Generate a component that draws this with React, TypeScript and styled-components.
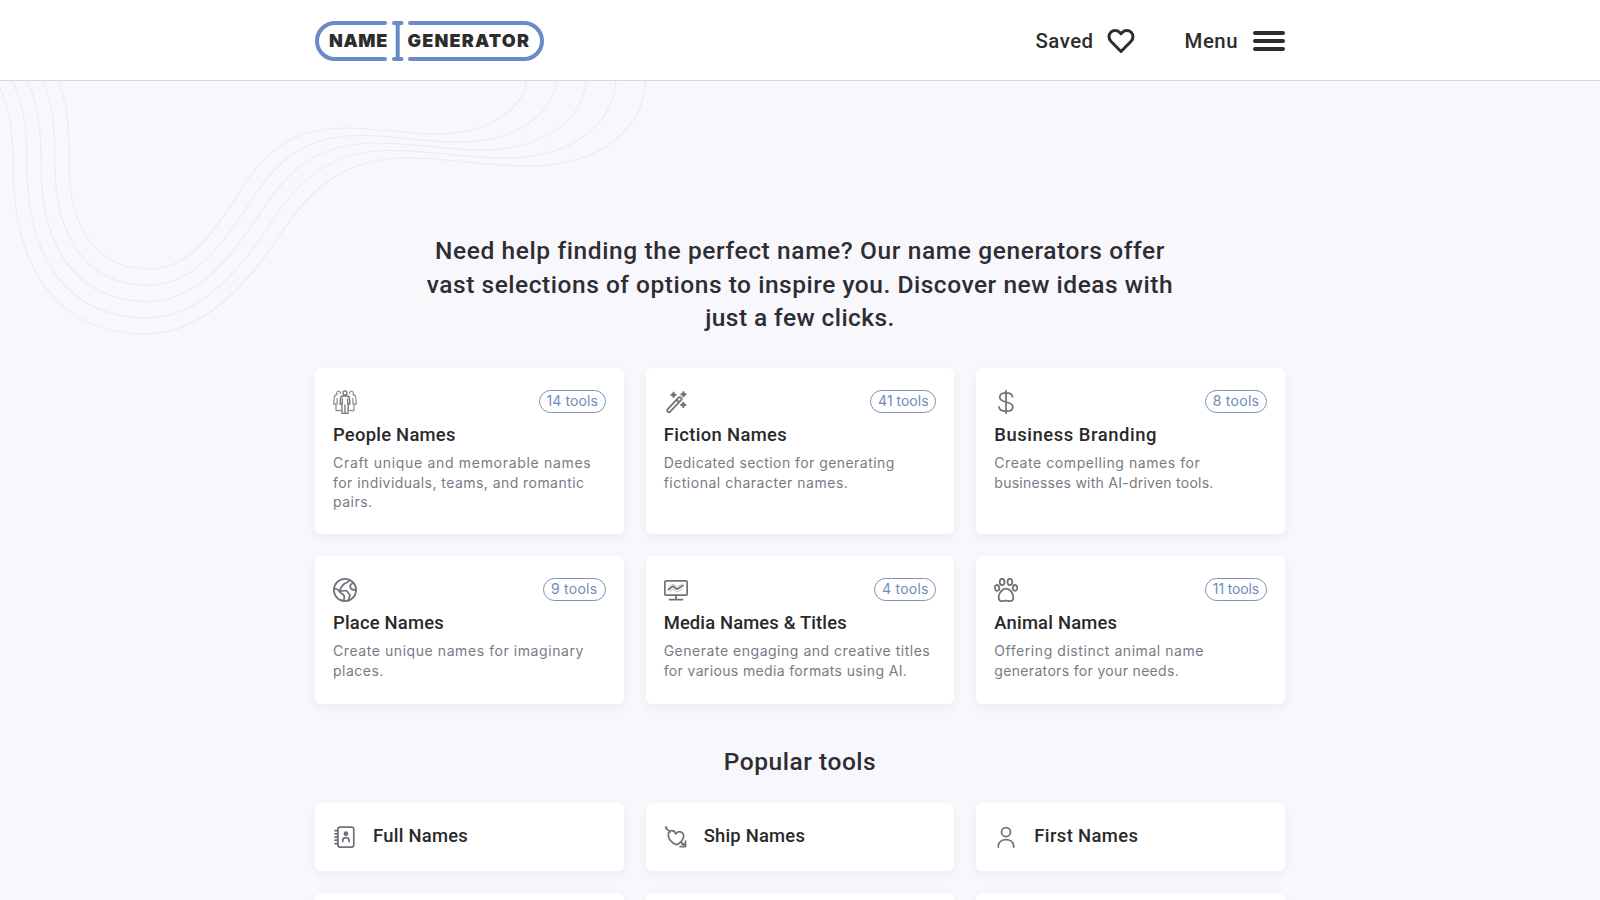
import React from 'react';
import styled, { createGlobalStyle } from 'styled-components';

const GlobalStyle = createGlobalStyle`
  *, *::before, *::after { box-sizing: border-box; }
  body {
    margin: 0;
    background: #f7f7fc;
    color: #2d2d30;
    font-family: Roboto, "Liberation Sans", sans-serif;
  }
  h1, h2, h3, p { margin: 0; }
`;

const Page = styled.div`
  position: relative;
  height: 900px;
  overflow: hidden;
`;

const Header = styled.header`
  position: relative;
  height: 81px;
  background: #fff;
  border-bottom: 1px solid #d6d6dc;
`;

const HeaderInner = styled.div`
  display: flex;
  align-items: center;
  justify-content: space-between;
  width: 970px;
  height: 80px;
  margin: 0 auto;
  padding-top: 2px;
`;

const HeaderActions = styled.nav`
  display: flex;
  align-items: center;
  gap: 50px;
`;

const HeaderAction = styled.a<{ $gap: number }>`
  display: flex;
  align-items: center;
  gap: ${(p) => p.$gap}px;
  font-size: 20.4px;
  font-weight: 500;
  letter-spacing: 0.5px;
  color: #2d2d2d;
`;

const Waves = styled.svg`
  position: absolute;
  top: 0;
  left: 0;
  pointer-events: none;
`;

const Main = styled.main`
  position: relative;
  width: 970px;
  margin: 0 auto;
  padding-top: 153px;
`;

const Line = styled.span<{ $track: number }>`
  display: block;
  white-space: nowrap;
  letter-spacing: ${(p) => p.$track}px;
`;

const Heading = styled.h1`
  font-size: 24.5px;
  font-weight: 500;
  line-height: 33.6px;
  text-align: center;
  color: #2e2d33;
`;

const CategoryGrid = styled.section`
  display: grid;
  grid-template-columns: repeat(3, 1fr);
  grid-template-rows: 165.8px 147.4px;
  gap: 22.4px 22px;
  margin: 33.2px 0 41.2px;
`;

const Card = styled.a`
  display: block;
  background: #fff;
  border-radius: 6px;
  box-shadow: 0 4px 12px rgba(30, 30, 60, 0.05);
`;

const CategoryCard = styled(Card)`
  padding: 22px 18px;
`;

const CardTop = styled.div`
  display: flex;
  align-items: center;
  justify-content: space-between;
  height: 24px;
`;

const Pill = styled.span<{ $track: number; $width: number }>`
  width: ${(p) => p.$width}px;
  height: 23px;
  margin-top: -0.4px;
  border: 1px solid #7a93b8;
  border-radius: 12px;
  font: 400 14px/20px Inter, sans-serif;
  letter-spacing: ${(p) => p.$track}px;
  text-align: center;
  white-space: nowrap;
  color: #6f8db9;
`;

const CardTitle = styled.h3`
  margin-top: 8.3px;
  font-size: 18.4px;
  font-weight: 500;
  line-height: 25.2px;
  color: #29292b;
`;

const Description = styled.p`
  margin-top: 5.6px;
  font: 400 14px/19.6px Inter, sans-serif;
  color: #787b84;
`;

const PopularGrid = styled.section`
  display: grid;
  grid-template-columns: repeat(3, 1fr);
  grid-auto-rows: 67.6px;
  gap: 22.4px;
  column-gap: 22px;
  margin-top: 25px;
`;

const PopularCard = styled(Card)`
  display: flex;
  align-items: center;
  gap: 16px;
  padding: 0 18px;
`;

const PopularTitle = styled.h3`
  margin-top: -4px;
  font-size: 18.4px;
  font-weight: 500;
  line-height: 25.2px;
  color: #29292b;
`;

const Glyph = styled.svg`
  flex: none;
  width: 24px;
  height: 24px;
  fill: none;
  stroke: #6f7278;
  stroke-width: 1.75;
  stroke-linecap: round;
  stroke-linejoin: round;
`;

const LogoText = styled.text`
  font: 900 18px Inter, sans-serif;
  fill: #2d2d2d;
`;

const Logo = () => (
  <svg width="229" height="40" viewBox="0 0 229 40">
    <g fill="none" stroke="#6a8bc8" strokeWidth="4" strokeLinecap="round">
      <path d="M70 2H20A18 18 0 0 0 20 38H70" />
      <path d="M95 2H209A18 18 0 0 1 209 38H95" />
      <path d="M79 2H86.5M79 38H86.5M82.7 2V38" />
    </g>
    <LogoText x="14" y="26.2" letterSpacing="0.6">NAME</LogoText>
    <LogoText x="92.5" y="26.2" letterSpacing="1.2">GENERATOR</LogoText>
  </svg>
);

/* t runs from 0 (outermost curve) to 4 (innermost curve) */
const wavePath = (t: number) => {
  const mix = (a: number, b: number) => a + ((b - a) * t) / 4;
  return [
    `M${mix(-4, 58)} 80`,
    `C${mix(9, 68)} 105 ${mix(13, 69)} 125 ${mix(13, 69)} 165`,
    `C${mix(13, 69)} ${mix(275, 225)} ${mix(62, 95)} ${mix(334, 269)} ${mix(146, 149)} ${mix(334, 269)}`,
    `C${mix(205, 188)} ${mix(334, 269)} ${mix(250, 210)} ${mix(280, 236)} ${mix(278, 232)} ${mix(238, 204)}`,
    `C${mix(306, 256)} ${mix(194, 164)} ${mix(340, 280)} ${mix(158, 128)} ${mix(405, 345)} ${mix(158, 128)}`,
    `C${mix(450, 380)} ${mix(158, 128)} ${mix(480, 403)} ${mix(166, 134)} ${mix(527, 438)} ${mix(166, 134)}`,
    `C${mix(600, 485)} ${mix(166, 134)} ${mix(643, 522)} ${mix(130, 112)} ${mix(646, 527)} 80`,
  ].join('');
};

const icons = {
  people: (
    <Glyph viewBox="0 0 24 24">
      <g strokeWidth="1.3">
        <circle cx="12" cy="2.9" r="2" />
        <path d="M10 6h4q2.300 0 2.500 2.500L17 14h-1.800L15 23.300H9L8.800 14H7l.5-5.500Q7.700 6 10 6zM12 15v8M9.300 9v5M14.700 9v5" />
        <path opacity=".75" d="M7.500 3.500A2 2 0 1 0 4 4.500Q1.500 5 1.200 8L.7 14H3v6.500h4.500M16.500 3.500a2 2 0 1 1 3.500 1q2.500.5 2.800 3.500l.5 6H21v6.500h-4.500M4.200 8.500V14M19.800 8.500V14" />
      </g>
    </Glyph>
  ),
  wand: (
    <Glyph viewBox="0 0 24 24">
      <path d="M3.700 19.200 14.500 7.700a1.700 1.700 0 0 1 2.500 2.500L6.200 21.600a1.700 1.700 0 0 1-2.500-2.400zM12.600 9.800l2.400 2.400" />
      <path fill="#6f7278" d="M9.500 2.500l.6 1.700 1.700.6-1.700.6-.6 1.700-.6-1.700-1.700-.6 1.700-.6zM19.500 2l.6 1.700 1.700.6-1.700.6-.6 1.700-.6-1.700-1.700-.6 1.700-.6zM19.300 12.500l.6 1.700 1.700.6-1.700.6-.6 1.700-.6-1.700-1.700-.6 1.700-.6z" />
    </Glyph>
  ),
  dollar: (
    <Glyph viewBox="0 0 24 24">
      <path d="M12 .8v22.400M18.500 6.800C18.300 4.300 15.800 2.900 12 2.900c-3.800 0-6.300 1.700-6.300 4.400 0 3 2.800 3.900 6.300 4.700 3.700.8 6.800 1.800 6.800 4.900 0 2.700-2.700 4.300-6.800 4.300-4.100 0-6.800-1.700-7-4.400" />
    </Glyph>
  ),
  globe: (
    <Glyph viewBox="0 0 24 24">
      <circle cx="12" cy="12" r="11.100" />
      <path d="M16.500 1.800C16 4.500 12.500 4.800 10.500 6.500 8.800 8 8 9.500 7.300 11.300c-.3 1.300.8 2 2.200 1.700l3.500-.5c1 0 1.500.8 2 2.200l2 2.300-1.500 5.200M1 10.500c3 .3 4.500 1 5.500 3 .8 1.800 3.500 2.300 4.500 4.300.8 1.700 0 3.300-.3 5.200M23 11.800c-2.500.4-4.500 0-5.700-2.300-.8-2 .5-3.500 2.700-4.800" />
    </Glyph>
  ),
  monitor: (
    <Glyph viewBox="0 0 24 24">
      <rect x=".8" y="2.800" width="22.400" height="14.400" rx="1.500" />
      <path d="M12 17.500v3.700M5.500 21.500h13" />
      <path d="M4.500 11.500 9 8.200l4 3 6-3.700" />
      <path opacity=".45" strokeWidth="1" d="M5 9l4-3 4 3 5-3M6 13.500l3-2.300 4 3 5-3" />
    </Glyph>
  ),
  paw: (
    <Glyph viewBox="0 0 24 24">
      <ellipse cx="8.100" cy="4" rx="2.400" ry="3.200" />
      <ellipse cx="15.900" cy="4" rx="2.400" ry="3.200" />
      <ellipse cx="3" cy="9.900" rx="2.200" ry="2.900" transform="rotate(-12 3 9.900)" />
      <ellipse cx="21" cy="9.900" rx="2.200" ry="2.900" transform="rotate(12 21 9.900)" />
      <path d="M12 10.500c-3.800 0-7.300 4.700-7.300 9 0 2.400 1.400 3.700 3.300 3.700 1.600 0 2.300-.7 4-.7s2.400.7 4 .7c1.900 0 3.300-1.300 3.300-3.700 0-4.300-3.500-9-7.300-9z" />
    </Glyph>
  ),
  book: (
    <Glyph viewBox="0 0 24 24">
      <rect x="4.800" y="2" width="16" height="20" rx="2.200" />
      <path d="M2 5.500h3M2 8.800h3M2 12h3M2 15.200h3M2 18.500h3M9.700 16.500v-.8a3.200 3.200 0 0 1 6.400 0v.8" />
      <circle cx="12.900" cy="8.700" r="1.500" fill="#6f7278" />
    </Glyph>
  ),
  arrowHeart: (
    <Glyph viewBox="0 0 24 24">
      <path d="M1.500 2.500 6 7M2.500 2v2.200M12.500 19.800C7 17.500 4.500 13.500 4.300 10.200 4.200 7 6 5.500 8 5.600c2 .1 3.300 1.400 3.800 3.400 1.100-1.800 2.800-2.700 4.800-2.200 2.600.7 3.600 3.200 2.700 6-.9 2.900-3.300 5.500-6.800 7zM17 17l4 4M21.500 16v5.500H16M18 19h2" />
    </Glyph>
  ),
  person: (
    <Glyph viewBox="0 0 24 24">
      <circle cx="12" cy="7" r="4.500" />
      <path d="M4.300 22v-1.500C4.800 16.800 8 14.500 12 14.500s7.200 2.300 7.700 6V22" />
    </Glyph>
  ),
};

type IconName = keyof typeof icons;
type TextLine = [text: string, track: number];

interface Category {
  icon: IconName;
  count: string;
  pillWidth: number;
  countTrack: number;
  title: TextLine;
  lines: TextLine[];
}

const categories: Category[] = [
  {
    icon: 'people', count: '14 tools', pillWidth: 67, countTrack: 0.1, title: ['People Names', 0.25],
    lines: [['Craft unique and memorable names', 0.69], ['for individuals, teams, and romantic', 0.446], ['pairs.', 0.5]],
  },
  {
    icon: 'wand', count: '41 tools', pillWidth: 66, countTrack: 0, title: ['Fiction Names', 0.36],
    lines: [['Dedicated section for generating', 0.44], ['fictional character names.', 0.51]],
  },
  {
    icon: 'dollar', count: '8 tools', pillWidth: 62, countTrack: 0.27, title: ['Business Branding', 0.55],
    lines: [['Create compelling names for', 0.57], ['businesses with AI-driven tools.', 0.25]],
  },
  {
    icon: 'globe', count: '9 tools', pillWidth: 63, countTrack: 0.27, title: ['Place Names', 0.2],
    lines: [['Create unique names for imaginary', 0.57], ['places.', 0.5]],
  },
  {
    icon: 'monitor', count: '4 tools', pillWidth: 62, countTrack: 0.23, title: ['Media Names & Titles', 0.14],
    lines: [['Generate engaging and creative titles', 0.52], ['for various media formats using AI.', 0.36]],
  },
  {
    icon: 'paw', count: '11 tools', pillWidth: 62, countTrack: -0.13, title: ['Animal Names', 0.2],
    lines: [['Offering distinct animal name', 0.556], ['generators for your needs.', 0.33]],
  },
];

const popular: { icon: IconName; title: TextLine }[] = [
  { icon: 'book', title: ['Full Names', 0.27] },
  { icon: 'arrowHeart', title: ['Ship Names', 0.22] },
  { icon: 'person', title: ['First Names', 0.38] },
];

export default function App() {
  return (
    <Page>
      <GlobalStyle />
      <Waves width="660" height="340" viewBox="0 0 660 340" fill="none" stroke="#ebebf0" strokeWidth="1.2">
        {[0, 1, 2, 3, 4].map((t) => (
          <path key={t} d={wavePath(t)} />
        ))}
      </Waves>
      <Header>
        <HeaderInner>
          <Logo />
          <HeaderActions>
            <HeaderAction $gap={13}>
              Saved
              <svg width="28" height="26" viewBox="0 0 28 26" fill="none" stroke="#2d2d2d" strokeWidth="3" strokeLinejoin="round">
                <path d="M14 23.500 3.900 13.200C1.500 10.700 1.400 6.700 3.800 4.300c2.500-2.500 6.400-2.400 8.700 0L14 5.800l1.500-1.500c2.300-2.400 6.200-2.500 8.700 0 2.400 2.400 2.300 6.400-.1 8.900z" />
              </svg>
            </HeaderAction>
            <HeaderAction $gap={15}>
              Menu
              <svg width="32" height="22" viewBox="0 0 32 22" stroke="#2d2d2d" strokeWidth="4" strokeLinecap="round">
                <path d="M2 3H30M2 11H30M2 19H30" />
              </svg>
            </HeaderAction>
          </HeaderActions>
        </HeaderInner>
      </Header>
      <Main>
        <Heading>
          <Line $track={0.61}>Need help finding the perfect name? Our name generators offer</Line>
          <Line $track={0.53}>vast selections of options to inspire you. Discover new ideas with</Line>
          <Line $track={0.42}>just a few clicks.</Line>
        </Heading>
        <CategoryGrid>
          {categories.map((c) => (
            <CategoryCard key={c.title[0]}>
              <CardTop>
                {icons[c.icon]}
                <Pill $width={c.pillWidth} $track={c.countTrack}>{c.count}</Pill>
              </CardTop>
              <CardTitle>
                <Line $track={c.title[1]}>{c.title[0]}</Line>
              </CardTitle>
              <Description>
                {c.lines.map(([text, track]) => (
                  <Line key={text} $track={track}>{text}</Line>
                ))}
              </Description>
            </CategoryCard>
          ))}
        </CategoryGrid>
        <Heading as="h2">
          <Line $track={0.54}>Popular tools</Line>
        </Heading>
        <PopularGrid>
          {popular.map((p) => (
            <PopularCard key={p.title[0]}>
              {icons[p.icon]}
              <PopularTitle>
                <Line $track={p.title[1]}>{p.title[0]}</Line>
              </PopularTitle>
            </PopularCard>
          ))}
          <PopularCard />
          <PopularCard />
          <PopularCard />
        </PopularGrid>
      </Main>
    </Page>
  );
}
